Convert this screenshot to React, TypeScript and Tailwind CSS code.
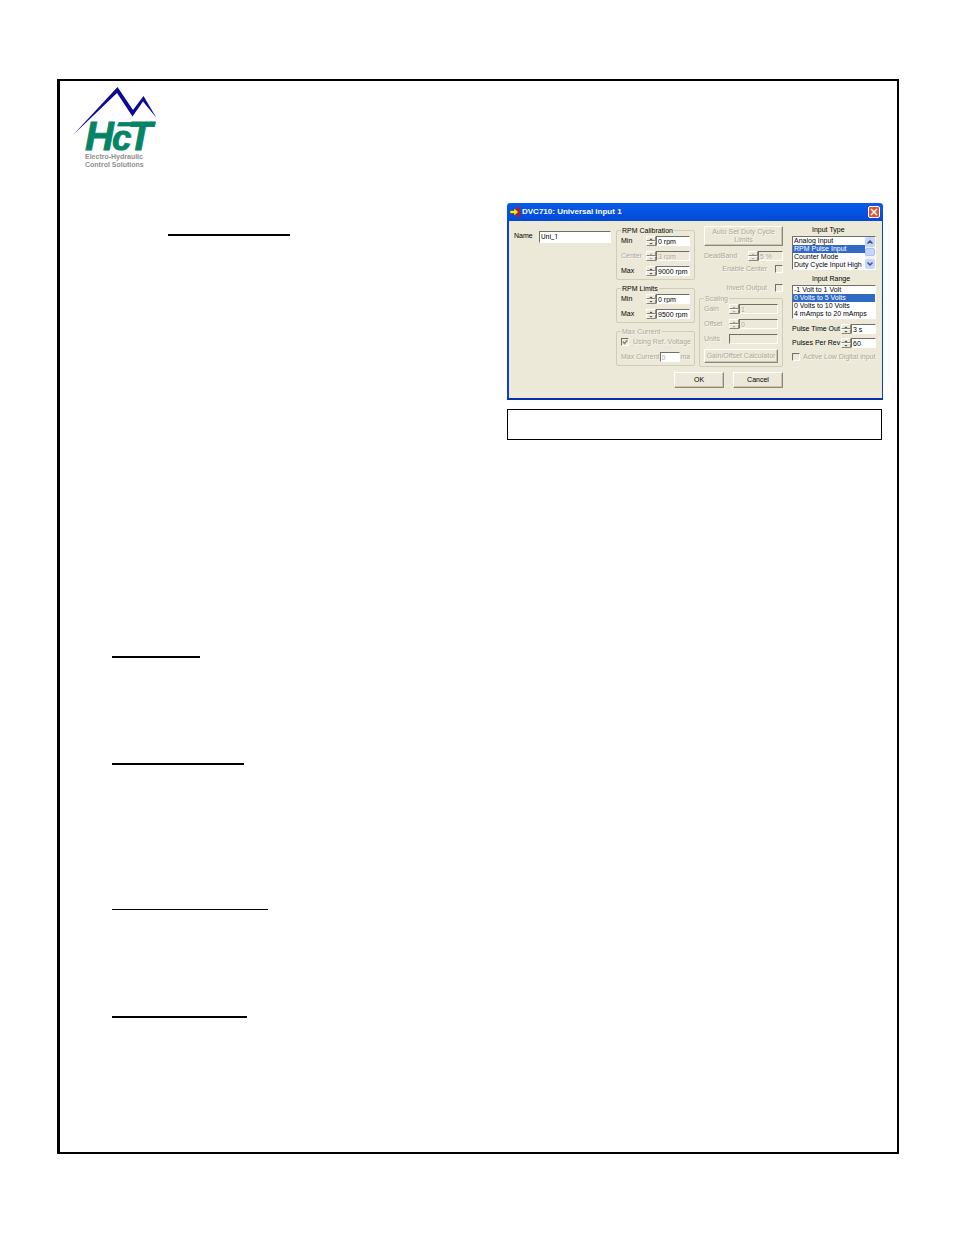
import type { ReactNode } from 'react';

const embossed = 'text-[#aca899] [text-shadow:1px_1px_0_#f8f7f0]';
const sunken = 'border border-t-[#716f64] border-l-[#716f64] border-b-white border-r-white';
const raised = 'border border-t-white border-l-white border-b-[#8b887a] border-r-[#8b887a] shadow-[inset_-1px_-1px_0_#c9c5b2]';

function Logo() {
  return (
    <svg width="86" height="84" viewBox="0 0 86 84" role="img" aria-label="HCT Electro-Hydraulic Control Solutions">
      <path d="M0 48 L44.500 0 L60 23 L70.500 9 L83.500 31 L70 14.500 L59.500 29.500 L44 6 Z" fill="#0a0a96" />
      <g fill="#048466" stroke="#048466" strokeWidth=".8" fontFamily="Liberation Sans, Arial, sans-serif" fontWeight="bold" fontStyle="italic">
        <text x="12" y="63" fontSize="40">H</text>
        <text x="39" y="63" fontSize="35">c</text>
        <text x="55" y="63" fontSize="40">T</text>
        <path d="M46 35.500 H82 L81 39 H44.500 Z" />
      </g>
      <g fill="#8f8f8f" fontFamily="Liberation Sans, Arial, sans-serif" fontWeight="bold" fontSize="7">
        <text x="12" y="72">Electro-Hydraulic</text>
        <text x="12" y="80">Control Solutions</text>
      </g>
    </svg>
  );
}

function Arrow({ down = false, disabled = false }: { down?: boolean; disabled?: boolean }) {
  return (
    <svg width="4" height="2" viewBox="0 0 4 2" fill={disabled ? '#aca899' : '#444'}>
      <path d={down ? 'M.5 0H3.500L2 1.500Z' : 'M.5 2H3.500L2 .5Z'} />
    </svg>
  );
}

function Spinner({ name, disabled }: { name: string; disabled?: boolean }) {
  const button = 'flex h-[5px] w-[10px] items-center justify-center border border-t-white border-l-white border-b-[#8b887a] border-r-[#8b887a] bg-[#ece9d8]';
  return (
    <span className="flex shrink-0 flex-col">
      <button type="button" className={button} disabled={disabled} aria-label={`Increase ${name}`}>
        <Arrow disabled={disabled} />
      </button>
      <button type="button" className={button} disabled={disabled} aria-label={`Decrease ${name}`}>
        <Arrow down disabled={disabled} />
      </button>
    </span>
  );
}

type FieldProps = {
  id: string;
  label: string;
  value: string;
  width: string;
  disabled?: boolean;
  spinner?: boolean;
};

function Field({ id, label, value, width, disabled, spinner = true }: FieldProps) {
  return (
    <div className="flex h-[10px] items-center">
      <label htmlFor={id} className={`flex-1 whitespace-nowrap ${disabled ? embossed : ''}`}>
        {label}
      </label>
      {spinner && <Spinner name={label} disabled={disabled} />}
      <input
        id={id}
        defaultValue={value}
        disabled={disabled}
        className={`h-[10px] pl-px ${width} ${sunken} ${disabled ? `bg-[#ece9d8] ${embossed}` : 'bg-white'}`}
      />
    </div>
  );
}

function Group({ title, disabled, children }: { title: string; disabled?: boolean; children: ReactNode }) {
  return (
    <section className="flex flex-col gap-[5px] rounded-xs border border-[#cfccba] px-1 pt-[5px] pb-[3px]">
      <h3 className="-mt-[10px] -mb-[5px] flex h-[10px] items-center">
        <span className={`bg-[#ece9d8] px-px ${disabled ? embossed : ''}`}>{title}</span>
      </h3>
      {children}
    </section>
  );
}

function Check({ id, checked = false }: { id: string; checked?: boolean }) {
  return (
    <span className="grid size-2 shrink-0">
      <input
        id={id}
        type="checkbox"
        disabled
        defaultChecked={checked}
        className={`col-start-1 row-start-1 size-2 appearance-none ${sunken}`}
      />
      {checked && (
        <svg className="pointer-events-none col-start-1 row-start-1" width="8" height="8" viewBox="0 0 8 8" fill="none" stroke="#8b887a" strokeWidth="1.500">
          <path d="M2 3.500 L3.500 5.500 L6.500 2" />
        </svg>
      )}
    </span>
  );
}

function List({ id, items, scroll }: { id: string; items: string[]; scroll?: boolean }) {
  return (
    <div className={`flex h-[34px] bg-white ${sunken}`}>
      <select id={id} size={4} defaultValue={items[1]} className="h-8 min-w-0 flex-1 appearance-none overflow-hidden bg-white">
        {items.map((item) => (
          <option
            key={item}
            value={item}
            className="h-2 min-h-0 px-px py-0 leading-[8px] checked:bg-[#316ac5] checked:bg-linear-to-r checked:from-[#316ac5] checked:to-[#316ac5] checked:text-white"
          >
            {item}
          </option>
        ))}
      </select>
      {scroll && (
        <div className="flex w-[10px] flex-col items-center bg-[#f3f2ec]">
          <button type="button" aria-label="Scroll up" className="flex h-[10px] w-[10px] items-center justify-center rounded-xs bg-[#c6d5fd]">
            <svg width="6" height="4" viewBox="0 0 6 4" fill="none" stroke="#3d5586" strokeWidth="1.500"><path d="M.5 3.500 3 1 5.500 3.500" /></svg>
          </button>
          <span className="mt-px h-2 w-[10px] rounded-xs border border-[#a9bff5] bg-[#c6d5fd]" />
          <button type="button" aria-label="Scroll down" className="mt-auto flex h-[10px] w-[10px] items-center justify-center rounded-xs bg-[#c6d5fd]">
            <svg width="6" height="4" viewBox="0 0 6 4" fill="none" stroke="#3d5586" strokeWidth="1.500"><path d="M.5 .5 3 3 5.500 .5" /></svg>
          </button>
        </div>
      )}
    </div>
  );
}

function InputDialog() {
  return (
    <form className="rounded-t-[4px] border-r border-b-2 border-l-2 border-[#0a3fd0] border-b-[#0b2fa8] bg-[#ece9d8] text-[7px] leading-[8px] text-black">
      <header className="-mr-px -ml-[2px] flex h-[18px] items-center gap-[2px] rounded-t-[4px] bg-linear-to-b from-[#0a5be8] via-[#0453e2] to-[#0448d6] px-[3px]">
        <svg width="10" height="10" viewBox="0 0 10 10">
          <path d="M7 0H10V10H7Z" fill="#d21212" />
          <path d="M0 3.500H4V1L8.500 5 4 9V6.500H0Z" fill="#ffe81a" stroke="#333" strokeWidth=".5" />
        </svg>
        <h2 className="flex-1 text-[8px] font-bold text-white">DVC710: Universal Input 1</h2>
        <button type="button" aria-label="Close" className="flex size-3 items-center justify-center rounded-xs border border-white bg-[#e2532f]">
          <svg width="8" height="8" viewBox="0 0 8 8" stroke="#fff" strokeWidth="1.500"><path d="M1 1 7 7M7 1 1 7" /></svg>
        </button>
      </header>

      <div className="flex pr-[6px] pl-[5px]">
        <div className="flex min-w-0 flex-1 items-start pt-[10px] pr-[5px]">
          <label htmlFor="name" className="w-[25px] pt-px">Name</label>
          <input id="name" defaultValue="Uni_1" className={`h-3 min-w-0 flex-1 bg-white pl-px font-[Roboto,sans-serif] leading-[10px] ${sunken}`} />
        </div>

        <div className="flex w-[79px] flex-col gap-2 pt-[9px]">
          <Group title="RPM Calibration">
            <Field id="cal-min" label="Min" value="0 rpm" width="w-[34px]" />
            <Field id="cal-center" label="Center" value="3 rpm" width="w-[34px]" disabled />
            <Field id="cal-max" label="Max" value="9000 rpm" width="w-[34px]" />
          </Group>
          <Group title="RPM Limits">
            <Field id="lim-min" label="Min" value="0 rpm" width="w-[34px]" />
            <Field id="lim-max" label="Max" value="9500 rpm" width="w-[34px]" />
          </Group>
          <Group title="Max Current" disabled>
            <div className="flex h-[10px] items-center gap-1">
              <Check id="ref-voltage" checked />
              <label htmlFor="ref-voltage" className={`whitespace-nowrap ${embossed}`}>Using Ref. Voltage</label>
            </div>
            <div className={`flex h-[10px] items-center ${embossed}`}>
              <label htmlFor="max-current" className="flex-1 whitespace-nowrap">Max Current</label>
              <input id="max-current" defaultValue="0" disabled className={`h-[10px] w-[20px] bg-white pl-px ${sunken}`} />
              <span className="pl-px">ma</span>
            </div>
          </Group>
        </div>

        <div className="ml-1 flex w-[84px] flex-col pt-[5px]">
          <button type="button" disabled className={`ml-[5px] h-[20px] ${raised} ${embossed}`}>
            Auto Set Duty Cycle Limits
          </button>
          <div className="mt-[5px] ml-[5px]">
            <Field id="deadband" label="DeadBand" value="5 %" width="w-[25px]" disabled />
          </div>
          <div className="mt-[3px] flex h-[10px] items-center justify-end gap-2">
            <label htmlFor="enable-center" className={embossed}>Enable Center</label>
            <Check id="enable-center" />
          </div>
          <div className="mt-[9px] mb-[5px] flex h-[10px] items-center justify-end gap-2">
            <label htmlFor="invert-output" className={embossed}>Invert Output</label>
            <Check id="invert-output" />
          </div>
          <Group title="Scaling" disabled>
            <Field id="gain" label="Gain" value="1" width="w-[39px]" disabled />
            <Field id="offset" label="Offset" value="0" width="w-[39px]" disabled />
            <Field id="units" label="Units" value="" width="w-[49px]" disabled spinner={false} />
            <button type="button" disabled className={`h-[14px] whitespace-nowrap ${raised} ${embossed}`}>
              Gain/Offset Calculator
            </button>
          </Group>
        </div>

        <div className="ml-[9px] flex w-[84px] flex-col pt-[5px]">
          <label htmlFor="input-type" className="mb-[2px] pl-[20px] whitespace-nowrap">Input Type</label>
          <List id="input-type" scroll items={['Analog Input', 'RPM Pulse Input', 'Counter Mode', 'Duty Cycle Input High']} />
          <label htmlFor="input-range" className="mt-[5px] mb-[2px] pl-[20px] whitespace-nowrap">Input Range</label>
          <List id="input-range" items={['-1 Volt to 1 Volt', '0 Volts to 5 Volts', '0 Volts to 10 Volts', '4 mAmps to 20 mAmps']} />
          <div className="mt-[5px] flex flex-col gap-1">
            <Field id="time-out" label="Pulse Time Out" value="3 s" width="w-[25px]" />
            <Field id="per-rev" label="Pulses Per Rev" value="60" width="w-[25px]" />
            <div className="flex h-[10px] items-center gap-[3px]">
              <Check id="active-low" />
              <label htmlFor="active-low" className={`whitespace-nowrap ${embossed}`}>Active Low Digital input</label>
            </div>
          </div>
        </div>
      </div>

      <div className="flex justify-end gap-[9px] pt-[5px] pr-[99px] pb-[10px]">
        <button type="button" className={`h-4 w-[50px] ${raised}`}>OK</button>
        <button type="button" className={`h-4 w-[50px] ${raised}`}>Cancel</button>
      </div>
    </form>
  );
}

export default function App() {
  return (
    <div className="min-h-screen bg-white pt-[79px] pr-[55px] pb-[81px] pl-[57px] font-['Liberation_Sans',Arial,sans-serif]">
      <main className="border-2 border-l-[3px] border-black pb-[134px]">
        <header className="pt-[6px] pl-[13px]">
          <Logo />
        </header>

        <div className="mt-8 flex pr-[14px]">
          <div className="flex-1 pt-[31px] pl-[108px]">
            <div className="h-[2px] w-[122px] bg-black" />
          </div>
          <div className="w-[376px]">
            <InputDialog />
            <div className="mt-[9px] mr-px h-[31px] border border-black" />
          </div>
        </div>

        <div className="flex flex-col pt-[216px] pl-[52px]">
          <div className="h-[2px] w-[88px] bg-black" />
          <div className="mt-[105px] h-[2px] w-[132px] bg-black" />
          <div className="mt-[144px] h-px w-[156px] bg-black" />
          <div className="mt-[106px] h-[2px] w-[135px] bg-black" />
        </div>
      </main>
    </div>
  );
}
